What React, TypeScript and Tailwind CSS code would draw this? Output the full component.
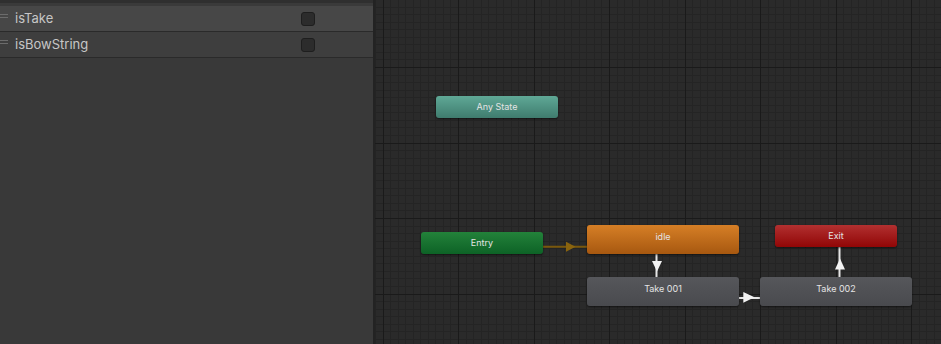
import React from "react";

const W = 566;
const H = 344;
const MAJOR = 75.5;
const MINOR = MAJOR / 10;
const OX = 7.5;
const OY = 67 - MAJOR;

function gridLines() {
  const minorX: number[] = [];
  const majorX: number[] = [];
  const minorY: number[] = [];
  const majorY: number[] = [];
  for (let i = -20; i < 100; i++) {
    const x = OX + i * MINOR;
    if (x < -1 || x > W + 1) continue;
    (i % 10 === 0 ? majorX : minorX).push(Math.round(x));
  }
  for (let i = -20; i < 80; i++) {
    const y = OY + i * MINOR;
    if (y < -1 || y > H + 1) continue;
    (((i % 10) + 10) % 10 === 0 ? majorY : minorY).push(Math.round(y));
  }
  return { minorX, majorX, minorY, majorY };
}

function Grid() {
  const { minorX, majorX, minorY, majorY } = gridLines();
  return (
    <svg className="absolute inset-0" width={W} height={H} shapeRendering="crispEdges">
      {minorX.map((x) => (
        <rect key={"mx" + x} x={x} y={0} width={1} height={H} fill="#242424" />
      ))}
      {minorY.map((y) => (
        <rect key={"my" + y} x={0} y={y} width={W} height={1} fill="#242424" />
      ))}
      {majorX.map((x) => (
        <rect key={"Mx" + x} x={x} y={0} width={1} height={H} fill="#1a1a1a" />
      ))}
      {majorY.map((y) => (
        <rect key={"My" + y} x={0} y={y} width={W} height={1} fill="#1a1a1a" />
      ))}
    </svg>
  );
}

function Arrows() {
  return (
    <svg className="absolute inset-0 pointer-events-none" width={W} height={H}>
      {/* Entry -> idle */}
      <line x1={168} y1={246.7} x2={212} y2={246.7} stroke="#7a580c" strokeWidth={2} />
      <polygon points="191,241.7 200.5,246.7 191,251.7" fill="#8a640e" />
      {/* idle -> Take 001 */}
      <line x1={281.5} y1={254} x2={281.5} y2={277} stroke="#e6e6e6" strokeWidth={2} />
      <polygon points="277,261 287,261 282,271.5" fill="#f2f2f2" />
      {/* Take 001 -> Take 002 */}
      <line x1={364} y1={298} x2={385} y2={298} stroke="#e6e6e6" strokeWidth={2} />
      <polygon points="368.3,292 379.5,297.3 368.3,302.7" fill="#f2f2f2" />
      {/* Take 002 -> Exit */}
      <line x1={464.5} y1={247} x2={464.5} y2={277} stroke="#e6e6e6" strokeWidth={2} />
      <polygon points="460,269.5 470,269.5 465,258.5" fill="#f2f2f2" />
    </svg>
  );
}

type NodeProps = {
  label: string;
  className: string;
};

function Node({ label, className }: NodeProps) {
  return (
    <div
      className={
        "absolute flex items-center justify-center rounded-[3px] text-[9px] text-[#e4e4e4] shadow-[0_1px_2px_rgba(0,0,0,0.55)] " +
        className
      }
    >
      {label}
    </div>
  );
}

function ParamRow({ name, selected }: { name: string; selected?: boolean }) {
  return (
    <div
      className={
        "flex h-[26px] items-center border-b border-[#2a2a2a] " +
        (selected ? "bg-[#474747]" : "bg-[#3e3e3e]")
      }
    >
      <div className="flex w-2 flex-col gap-[2px] self-center -mt-[6px]">
        <div className="h-px w-2 bg-[#6c6c6c]" />
        <div className="h-px w-2 bg-[#6c6c6c]" />
      </div>
      <div className="ml-[7px] flex-1 text-[13px] leading-none text-[#c6c6c6]">{name}</div>
      <div className="mr-[58px] h-[14px] w-[14px] rounded-[3px] border border-[#1e1e1e] bg-[#2c2c2c]" />
    </div>
  );
}

export default function App() {
  return (
    <div
      className="flex h-[344px] w-[941px] overflow-hidden bg-[#393939]"
      style={{ fontFamily: "Inter, 'Liberation Sans', sans-serif" }}
    >
      <div className="flex w-[373px] shrink-0 flex-col bg-[#393939]">
        <div className="h-[3px] bg-[#2f2f2f]" />
        <div className="h-[3px] bg-[#3a3a3a]" />
        <ParamRow name="isTake" selected />
        <ParamRow name="isBowString" />
      </div>
      <div className="w-[2px] shrink-0 bg-[#232323]" />
      <div className="relative h-[344px] w-[566px] shrink-0 bg-[#2a2a2a]">
        <Grid />
        <Arrows />
        <Node
          label="Any State"
          className="left-[61px] top-[96px] h-[22px] w-[122px] bg-[linear-gradient(#5fa896,#3f7c6e)]"
        />
        <Node
          label="Entry"
          className="left-[46px] top-[232px] h-[22px] w-[122px] bg-[linear-gradient(#23823a,#0d6226)]"
        />
        <Node
          label="idle"
          className="left-[212px] top-[225px] h-[29px] w-[152px] pb-[5px] bg-[linear-gradient(#d67f26,#a75810)]"
        />
        <Node
          label="Take 001"
          className="left-[212px] top-[277px] h-[29px] w-[152px] pb-[5px] bg-[linear-gradient(#56575b,#494a4e)] text-[#d6d6d6]"
        />
        <Node
          label="Exit"
          className="left-[400px] top-[225px] h-[22px] w-[122px] bg-[linear-gradient(#b23030,#910606)]"
        />
        <Node
          label="Take 002"
          className="left-[385px] top-[277px] h-[29px] w-[152px] pb-[5px] bg-[linear-gradient(#56575b,#494a4e)] text-[#d6d6d6]"
        />
      </div>
    </div>
  );
}
